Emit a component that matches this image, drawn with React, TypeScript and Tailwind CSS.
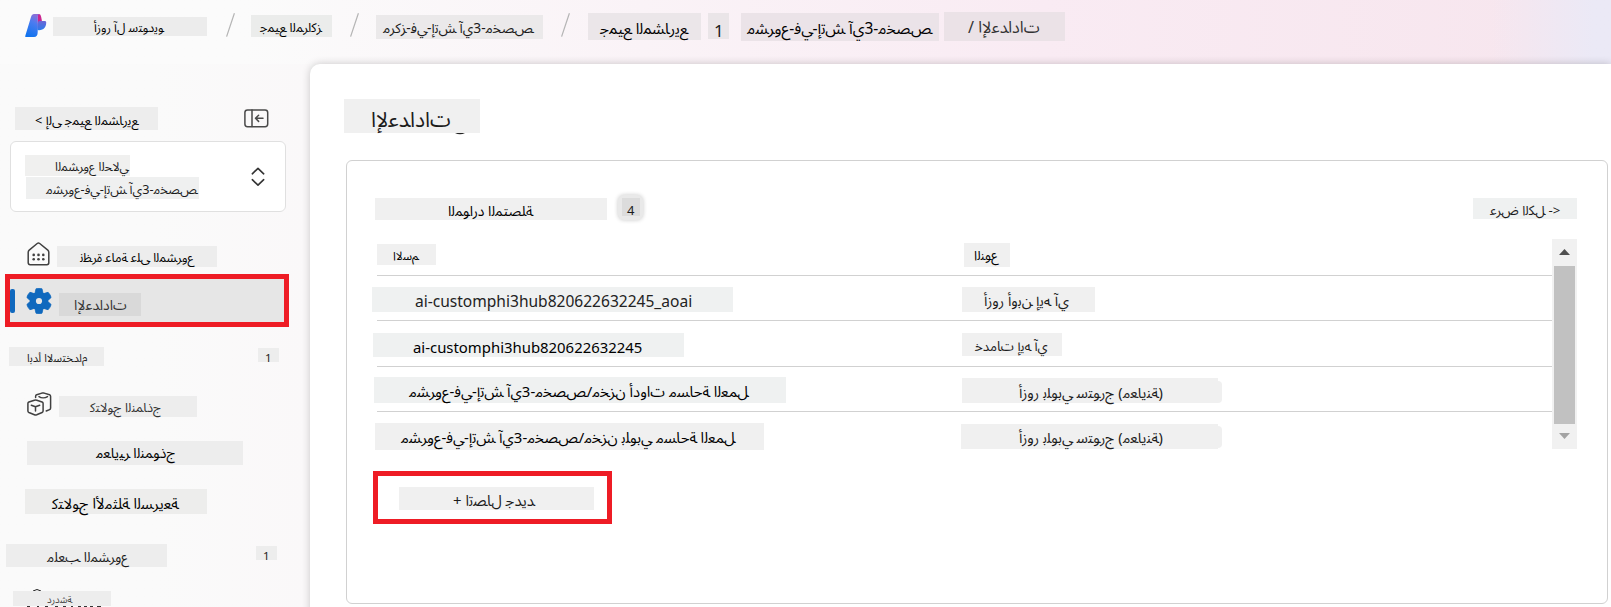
import React from "react";

/* Contextual glyph forms, so that words can run left to right in logical order. */
const DUAL = new Map<string, number>([
  ["ب", 0xfe8f], ["ت", 0xfe95], ["ث", 0xfe99], ["ج", 0xfe9d], ["ح", 0xfea1], ["خ", 0xfea5],
  ["س", 0xfeb1], ["ش", 0xfeb5], ["ص", 0xfeb9], ["ض", 0xfebd], ["ط", 0xfec1], ["ظ", 0xfec5],
  ["ع", 0xfec9], ["غ", 0xfecd], ["ف", 0xfed1], ["ق", 0xfed5], ["ك", 0xfed9], ["ل", 0xfedd],
  ["م", 0xfee1], ["ن", 0xfee5], ["ه", 0xfee9], ["ي", 0xfef1],
]);
const RIGHT = new Map<string, number>([
  ["آ", 0xfe81], ["أ", 0xfe83], ["إ", 0xfe87], ["ا", 0xfe8d], ["ة", 0xfe93], ["د", 0xfea9],
  ["ذ", 0xfeab], ["ر", 0xfead], ["ز", 0xfeaf], ["و", 0xfeed], ["ى", 0xfeef],
]);
const LAM_ALEF = new Map<string, number>([["آ", 0xfef5], ["أ", 0xfef7], ["إ", 0xfef9], ["ا", 0xfefb]]);

function shape(text: string) {
  const chars = [...text];
  let out = "";
  let joined = false;
  for (let i = 0; i < chars.length; i++) {
    const ch = chars[i];
    const next = chars[i + 1] ?? "";
    const j = joined ? 1 : 0;
    if (ch === "ل" && LAM_ALEF.has(next)) {
      out += String.fromCharCode(LAM_ALEF.get(next)! + j);
      joined = false;
      i++;
    } else if (DUAL.has(ch)) {
      const n = DUAL.has(next) || RIGHT.has(next);
      out += String.fromCharCode(DUAL.get(ch)! + (n ? 2 : 0) + j);
      joined = n;
    } else {
      out += RIGHT.has(ch) ? String.fromCharCode(RIGHT.get(ch)! + j) : ch;
      joined = false;
    }
  }
  return out;
}

function Tag({ text, className }: { text: string; className: string }) {
  return (
    <div className={`shrink-0 whitespace-nowrap leading-5 [direction:ltr] [unicode-bidi:bidi-override] ${className}`}>
      {shape(text)}
    </div>
  );
}

function Slash({ className }: { className: string }) {
  return (
    <svg className={`mt-[13px] h-6 w-[9px] shrink-0 ${className}`} viewBox="0 0 9 24" stroke="#b4b4b4" strokeWidth="1.2">
      <path d="M8.4 0.3 L0.6 23.6" />
    </svg>
  );
}

function Logo() {
  return (
    <svg className="mt-[13px] ml-[25px] h-6 w-[22px] shrink-0" viewBox="0 0 22 24">
      <defs>
        <linearGradient id="body" x1="0.6" y1="0" x2="0.3" y2="1">
          <stop offset="0" stopColor="#8a6fd8" />
          <stop offset="0.35" stopColor="#4a7cf0" />
          <stop offset="1" stopColor="#0f73ee" />
        </linearGradient>
        <linearGradient id="lobe" x1="0" y1="0" x2="0" y2="1">
          <stop offset="0" stopColor="#6b66d6" />
          <stop offset="1" stopColor="#2b7bea" />
        </linearGradient>
      </defs>
      <path d="M12.5 1 H14 C15.8 1 16.3 4 16.8 7 L17 10 L12.5 16 Z" fill="#c9258f" />
      <path d="M14.5 8 H20 C21 8 21.4 9 21.2 10 C21 14 19 17 14 17.2 L12.4 17 V12 C12.6 9.5 13.2 8.2 14.5 8 Z" fill="url(#lobe)" />
      <path d="M9 1 H14.4 C13 1.3 12.7 2.6 12.7 5 V19 C12.7 22.5 11.5 24 9 24 H1.2 C0.2 24 0 23.4 0.4 22.4 L6 4 C6.8 1.8 7.6 1 9 1 Z" fill="url(#body)" />
    </svg>
  );
}

function CollapseIcon() {
  return (
    <svg className="mt-[2px] ml-[86px] h-[19px] w-[25px] shrink-0" viewBox="0 0 25 19" fill="none" stroke="#4a4a4a" strokeWidth="1.5" strokeLinecap="round" strokeLinejoin="round">
      <rect x="0.9" y="0.9" width="22.8" height="16.8" rx="2.6" />
      <path d="M8 1 V17.5 M19 9.3 H11.8 M14.6 6.2 L11.5 9.3 L14.6 12.4" />
    </svg>
  );
}

function HomeIcon() {
  return (
    <svg className="h-6 w-[23px] shrink-0" viewBox="0 0 23 24" fill="none" stroke="#404040" strokeWidth="1.5" strokeLinejoin="round">
      <path d="M1.2 10.2 C1.2 9.2 1.5 8.7 2.2 8.1 L10.2 1.5 C11.1 0.9 11.8 0.9 12.7 1.5 L20.8 8.1 C21.5 8.7 21.8 9.2 21.8 10.2 V20.8 C21.8 22 21.1 22.7 19.9 22.7 H3.1 C1.9 22.7 1.2 22 1.2 20.8 Z" />
      <g fill="#404040" stroke="none">
        <circle cx="6.7" cy="12.9" r="1.3" /><circle cx="11.5" cy="12.9" r="1.3" /><circle cx="16.3" cy="12.9" r="1.3" />
        <circle cx="6.7" cy="17.2" r="1.3" /><circle cx="11.5" cy="17.2" r="1.3" /><circle cx="16.3" cy="17.2" r="1.3" />
      </g>
    </svg>
  );
}

function GearIcon() {
  return (
    <svg className="ml-[11px] mt-px h-[26px] w-[26px] shrink-0" viewBox="-13 -13 26 26" fill="#1069be">
      <circle r="9.2" />
      {[0, 60, 120].map((angle) => (
        <path key={angle} transform={`rotate(${angle})`} d="M-3 -12.2 Q0 -13 3 -12.2 L4.2 -7 H-4.2 Z M-3 12.2 Q0 13 3 12.2 L4.2 7 H-4.2 Z" stroke="#1069be" strokeWidth="0.8" strokeLinejoin="round" />
      ))}
      <circle r="3.1" fill="#e6e6e6" />
    </svg>
  );
}

function CubesIcon() {
  return (
    <svg className="h-6 w-[25px] shrink-0" viewBox="0 0 25 24" fill="none" stroke="#404040" strokeWidth="1.5" strokeLinejoin="round" strokeLinecap="round">
      <path d="M0.9 11.4 C0.9 10.7 1.2 10.3 1.9 10 L7.4 8.2 C8.3 7.9 8.9 7.9 9.8 8.2 L15.1 10 C15.8 10.3 16.1 10.7 16.1 11.4 V19 C16.1 19.8 15.8 20.2 15.1 20.5 L9.7 22.7 C8.9 23 8.2 23 7.4 22.7 L1.9 20.5 C1.2 20.2 0.9 19.8 0.9 19 Z" />
      <path d="M4.3 13.2 L8.5 14.8 L12.7 13.2 M8.5 14.8 V19" />
      <path d="M8.6 5.6 V4.4 C8.6 3.6 8.9 3.1 9.7 2.8 L14.9 1.1 C15.7 0.9 16.3 0.9 17.1 1.1 L22.6 2.8 C23.3 3.1 23.6 3.6 23.6 4.4 V16 C23.6 16.8 23.3 17.3 22.6 17.6 L19.2 19 M12 4.6 C14.2 6.2 18 6.2 20.5 4.6" />
    </svg>
  );
}

function ChevronsIcon() {
  return (
    <svg className="mt-[25px] ml-auto mr-5 h-5 w-[14px] shrink-0" viewBox="0 0 14 20" fill="none" stroke="#333" strokeWidth="1.6" strokeLinecap="round" strokeLinejoin="round">
      <path d="M1.3 6.8 L7 1.3 L12.7 6.8 M1.3 12.7 L7 18.2 L12.7 12.7" />
    </svg>
  );
}

const ROWS = [
  {
    row: "h-[45px] border-b",
    name: "ai-customphi3hub820622632245_aoai",
    nameClass: "-ml-[5px] mt-[11px] mr-[229px] h-[25px] w-[361px] bg-[#eff1f1] pl-[43px] pt-1 text-[15.55px] text-[#222]",
    type: "أزور أوبن إيه آي",
    typeClass: "mt-[11px] h-[25px] w-[133px] bg-[#f0f0f0] pl-[22px] pt-[3px] text-[14.5px]",
    pill: false,
  },
  {
    row: "h-[46px] border-b",
    name: "ai-customphi3hub820622632245",
    nameClass: "-ml-1 mt-3 mr-[278px] h-6 w-[311px] bg-[#eff1f1] pl-10 pt-1 text-[14.9px] text-black",
    type: "خدمات إيه آي",
    typeClass: "mt-3 h-[23px] w-[100px] bg-[#f0f0f0] pl-[13px] pt-[3px] text-[13.3px]",
    pill: false,
  },
  {
    row: "h-[45px] border-b",
    name: "مشروع-في-إتش آي3-مخصص/مخزن أدوات مساحة العمل",
    nameClass: "-ml-[3px] mt-[10px] mr-[176px] h-[26px] w-[412px] bg-[#eff1f1] pl-[35px] pt-1 text-[14.9px] text-black",
    type: "أزور بلوبي ستورج (معاينة)",
    typeClass: "mt-[11px] h-[25px] w-[256px] bg-[#f0f0f0] pl-[57px] pt-1 text-[14.5px]",
    pill: true,
  },
  {
    row: "h-[37px]",
    name: "مشروع-في-إتش آي3-مخصص/مخزن بلوبي مساحة العمل",
    nameClass: "-ml-[2px] mt-[11px] mr-[197px] h-[27px] w-[389px] bg-[#f0f0f0] pl-[26px] pt-1 text-[14.9px] text-black",
    type: "أزور بلوبي ستورج (معاينة)",
    typeClass: "mt-3 h-[25px] w-[257px] bg-[#f0f0f0] pl-[58px] pt-[3px] text-[14.5px]",
    pill: true,
  },
];

function Header() {
  return (
    <header className="flex h-16 shrink-0 items-start bg-linear-to-r from-[#fbfbfb] from-15% via-[#f9ebf3] via-65% to-[#f7e6ee] to-95%">
      <Logo />
      <Tag text="أزور آل ستوديو" className="mt-[17px] ml-[6px] h-[19px] w-[154px] bg-[#ececec] pl-[41px] pt-px text-[12.2px] text-black" />
      <Slash className="ml-[19px]" />
      <Tag text="جميع المراكز" className="mt-[15px] ml-4 h-[22px] w-[81px] bg-[#ebeceb] pl-[9px] pt-[2px] text-[12.7px] text-black" />
      <Slash className="ml-[18px]" />
      <Tag text="مركز-في-إتش آي3-مخصص" className="mt-[15px] ml-[17px] h-6 w-[167px] bg-[#ebe9ea] pl-[7px] pt-[3px] text-[13.8px]" />
      <Slash className="ml-[18px]" />
      <Tag text="جميع المشاريع" className="mt-[13px] ml-[18px] h-[27px] w-[113px] bg-[#ebe6e9] pl-3 pt-[5px] text-[15.3px] text-black" />
      <Tag text="1" className="mt-[13px] ml-[7px] h-[26px] w-[21px] bg-[#eae5e8] pl-[6px] pt-2 text-[17px]" />
      <Tag text="مشروع-في-إتش آي3-مخصص" className="mt-[13px] ml-3 h-7 w-[198px] bg-[#ebe3e8] pl-[6px] pt-[5px] text-[15.5px] text-black" />
      <Tag text="/ الإعدادات" className="mt-3 ml-[5px] h-[29px] w-[121px] bg-[#ebe2e7] pl-6 pt-[5px] text-[16.2px] text-[#333]" />
      <div className="ml-auto h-16 w-[120px] bg-linear-to-r from-transparent to-[#ebe9f6] to-85%" />
    </header>
  );
}

function Sidebar() {
  return (
    <aside className="flex h-full w-[310px] shrink-0 flex-col items-start bg-linear-to-r from-[#fafafa] via-[#fafafa] to-[#faf8f9]">
      <div className="mt-[43px] ml-[15px] flex h-[34px]">
        <Tag text="< إلى جميع المشاريع" className="h-[23px] w-[143px] bg-[#ededed] pl-5 pt-[3px] text-[12.8px] text-black" />
        <CollapseIcon />
      </div>
      <div className="ml-[10px] flex h-[71px] w-[276px] rounded-md border border-[#e0e0e0] bg-white">
        <div className="mt-[13px] ml-[14px]">
          <Tag text="المشروع الحالي" className="h-[21px] w-[105px] bg-[#f0f0ef] pl-[30px] pt-[2px] text-[12.3px]" />
          <Tag text="مشروع-في-إتش آي3-مخصص" className="mt-px ml-px h-[22px] w-[173px] bg-[#eff0f0] pl-5 pt-[2px] text-[12.7px]" />
        </div>
        <ChevronsIcon />
      </div>
      <div className="mt-[30px] ml-[27px] flex h-8 items-start">
        <HomeIcon />
        <Tag text="نظرة عامة على المشروع" className="mt-1 ml-[7px] h-[21px] w-40 bg-[#ededed] pl-[23px] pt-[2px] text-[12.4px] text-black" />
      </div>
      <div className="ml-[5px] flex h-[53px] w-[284px] items-center border-[5px] border-[#ee1c25] bg-[#e6e6e6]">
        <div className="mt-px h-6 w-[5px] rounded-xs bg-[#1069be]" />
        <GearIcon />
        <Tag text="الإعدادات" className="mt-2 ml-[7px] h-[23px] w-[82px] bg-[#d9d9d9] pl-[15px] pt-[2px] text-[13.9px] text-[#333]" />
      </div>
      <div className="mt-5 ml-[9px] flex">
        <Tag text="ابدأ الاستخدام" className="h-[19px] w-[95px] bg-[#ededed] pl-[18px] pt-px text-[11.2px]" />
        <Tag text="1" className="mt-px ml-[154px] h-[14px] w-[21px] bg-[#ededed] pl-[7px] pt-px !leading-[17px] text-[11.5px]" />
      </div>
      <div className="mt-[26px] ml-[27px] flex h-[49px]">
        <CubesIcon />
        <Tag text="كتالوج النماذج" className="mt-1 ml-[7px] h-[21px] w-[138px] bg-[#ededed] pl-[31px] pt-px text-[12.8px] text-[#333]" />
      </div>
      <Tag text="معايير النموذج" className="ml-[27px] h-6 w-[216px] bg-[#ededed] pl-[69px] pt-[2px] text-[14px] text-black" />
      <Tag text="كتالوج الأمثلة السريعة" className="mt-6 ml-[25px] h-[25px] w-[182px] bg-[#ededec] pl-[27px] pt-1 text-[14.8px] text-black" />
      <div className="mt-[30px] ml-[6px] flex">
        <Tag text="ملعب المشروع" className="h-[23px] w-[161px] bg-[#ededed] pl-[41px] pt-[3px] text-[13.6px]" />
        <Tag text="1" className="mt-[2px] ml-[89px] h-[14px] w-[21px] bg-[#ededed] pl-[7px] pt-px !leading-[17px] text-[11.5px]" />
      </div>
      <svg className="mt-[22px] ml-[33px] h-[2px] w-2" viewBox="0 0 8 2">
        <path d="M0 2 Q4 -1 8 2" fill="none" stroke="#222" />
      </svg>
      <Tag text="دردشة" className="ml-[13px] h-[15px] w-[98px] bg-[#ededed] pl-[34px] pt-px !leading-4 text-[9.8px] text-[#444]" />
      <svg className="ml-[27px] h-[1px] w-[76px] shrink-0" viewBox="0 0 76 1">
        <path d="M0 .5 H3 M10 .5 H12 M18 .5 H21 M28 .5 H31 M36 .5 H39 M44 .5 H46 M51 .5 H54 M57 .5 H60 M63 .5 H66 M70 .5 H74" stroke="#333" />
      </svg>
    </aside>
  );
}

function Scrollbar() {
  return (
    <div className="flex h-[210px] w-[25px] shrink-0 flex-col items-center bg-[#f1f1f1]">
      <svg className="mt-[10px] h-[6px] w-[11px]" viewBox="0 0 11 6"><path d="M5.5 0 L11 6 H0 Z" fill="#505050" /></svg>
      <div className="mt-[11px] h-[158px] w-[21px] bg-[#c1c1c1]" />
      <svg className="mt-[9px] h-[6px] w-[11px]" viewBox="0 0 11 6"><path d="M5.5 6 L11 0 H0 Z" fill="#a3a3a3" /></svg>
    </div>
  );
}

function ConnectedResources() {
  return (
    <section className="mt-[25px] ml-9 h-[444px] w-[1262px] rounded-md border border-[#d1d1d1]">
      <div className="flex h-[78px] items-start pt-[34px]">
        <Tag text="الموارد المتصلة" className="mt-[3px] ml-7 h-[22px] w-[232px] bg-[#f0f0f0] pl-[73px] pt-[3px] text-[14px] text-black" />
        <div className="ml-[11px] flex h-[25px] w-[25px] rounded-md bg-[#e9e9e9] pt-[3px] pl-1 shadow-[0_0_4px_rgba(0,0,0,0.22)]">
          <Tag text="4" className="h-[18px] w-[18px] bg-[#dcdcdc] pl-[5px] pt-[2px] text-[13px]" />
        </div>
        <Tag text="عرض الكل ->" className="mt-[3px] mr-[30px] ml-auto h-[21px] w-[104px] bg-[#eff1f1] pl-[17px] pt-[2px] text-[13.2px]" />
      </div>
      <div className="flex">
        <div className="ml-[30px] w-[1175px] shrink-0">
          <div className="flex h-[37px] items-start border-b border-[#d1d1d1]">
            <Tag text="الاسم" className="mt-[5px] mr-[528px] h-[21px] w-[59px] bg-[#f0f0f0] pl-4 pt-px text-[11.9px] text-black" />
            <Tag text="النوع" className="mt-1 h-6 w-[46px] bg-[#f0f0f0] pl-[10px] pt-[2px] text-[13.2px] text-black" />
          </div>
          {ROWS.map((r) => (
            <div key={r.name} className={`flex items-start border-[#d1d1d1] ${r.row}`}>
              <Tag text={r.name} className={r.nameClass} />
              <Tag text={r.type} className={r.typeClass} />
              {r.pill && <div className="mt-[14px] h-[22px] w-1 rounded-r-full bg-[#f0f0f0]" />}
            </div>
          ))}
        </div>
        <Scrollbar />
      </div>
      <div className="mt-[22px] ml-[26px] h-[53px] w-[239px] border-[5px] border-[#ee1c25] pt-[11px] pl-[21px]">
        <Tag text="+ اتصال جديد" className="h-[23px] w-[195px] bg-[#f0f0f0] pl-[54px] pt-[3px] text-[14.9px]" />
      </div>
    </section>
  );
}

export default function App() {
  return (
    <div className="flex h-[607px] w-[1611px] flex-col overflow-hidden bg-[#fafafa] text-[#1c1c1c] [font-family:'Noto_Sans','Noto_Sans_Arabic',sans-serif]">
      <Header />
      <div className="flex h-[543px]">
        <Sidebar />
        <main className="h-[560px] min-w-0 flex-1 rounded-tl-[10px] bg-white pt-[35px] shadow-[0_0_8px_rgba(0,0,0,0.2)]">
          <Tag text="الإعدادات" className="ml-[34px] h-[34px] w-[136px] bg-[#f0f0f0] pl-[27px] pt-[10px] text-[21px]" />
          <svg className="ml-[145px] block h-[2px] w-[10px]" viewBox="0 0 10 2">
            <path d="M0 0 Q5 2.4 10 0 Z" fill="#222" />
          </svg>
          <ConnectedResources />
        </main>
      </div>
    </div>
  );
}
